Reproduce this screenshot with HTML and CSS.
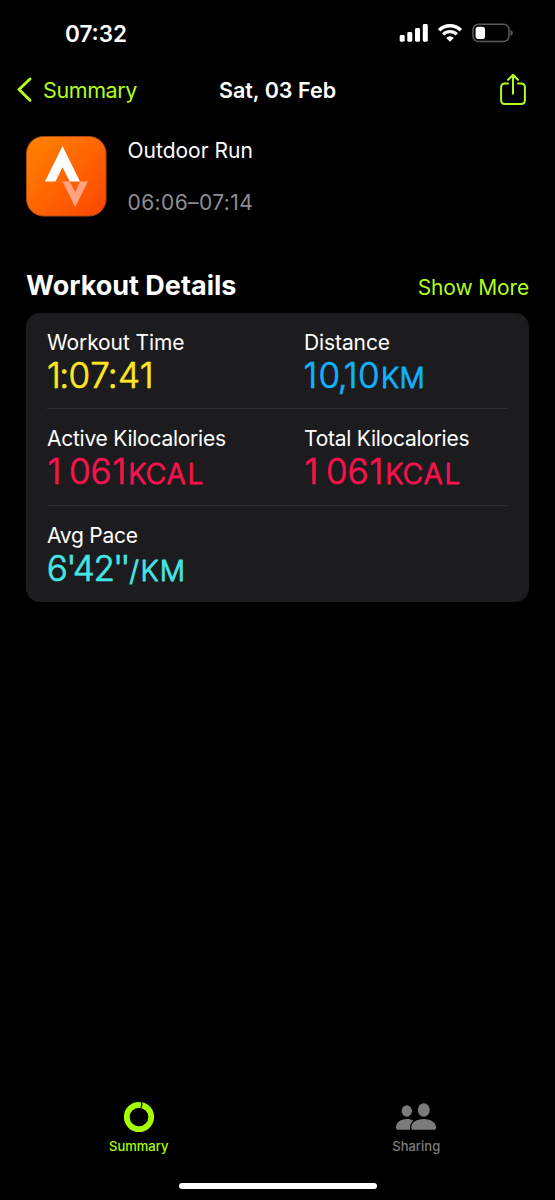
FILE: index.html
```html
<!DOCTYPE html>
<html lang="en">
<head>
<meta charset="utf-8">
<title>Workout</title>
<link rel="stylesheet" href="styles.css">
</head>
<body>
<div class="screen">
  <div class="status">
    <span class="clock">07:32</span>
    <div class="indicators">
      <svg width="30" height="20" viewBox="0 0 30 20" fill="#fff"><rect x="0.7" y="12" width="5" height="6.7" rx="1.4"/><rect x="8.3" y="9" width="5" height="9.7" rx="1.4"/><rect x="16" y="5" width="5" height="13.7" rx="1.4"/><rect x="23.8" y="1" width="5" height="17.7" rx="1.4"/></svg>
      <svg class="wifi" width="26" height="20" viewBox="0 0 26 20" fill="none" stroke="#fff" stroke-width="3.4"><path d="M2.1 7.2a15.6 15.6 0 0 1 21.8 0"/><path d="M6.2 11.4a9.7 9.7 0 0 1 13.6 0"/><path d="M13 18.8l-3.8-3.9a5.4 5.4 0 0 1 7.6 0z" fill="#fff" stroke="none"/></svg>
      <svg class="battery" width="42" height="20" viewBox="0 0 42 20"><rect x="1" y="1.2" width="36" height="17.4" rx="5.5" fill="none" stroke="#5c5c5e" stroke-width="1.5"/><rect x="3.6" y="3.7" width="9.4" height="12.4" rx="2.8" fill="#fff"/><path d="M38.500 7v6c1.700-.8 2.400-1.800 2.400-3S40.200 7.800 38.500 7z" fill="#5c5c5e"/></svg>
    </div>
  </div>
  <header class="nav">
    <a class="back"><svg width="18" height="28" viewBox="0 0 18 28" fill="none" stroke="#b1fc1d" stroke-width="3" stroke-linecap="round" stroke-linejoin="round"><path d="M15 3L4 13.500l11 10.800"/></svg><span>Summary</span></a>
    <h1 class="title">Sat, 03 Feb</h1>
    <svg class="share" width="28" height="34" viewBox="0 0 28 34" fill="none" stroke="#b1fc1d" stroke-width="2" stroke-linecap="round" stroke-linejoin="round"><path d="M9 10.500H5.500a3.400 3.400 0 0 0-3.400 3.400v13.700a3.400 3.400 0 0 0 3.400 3.400h17a3.400 3.400 0 0 0 3.400-3.400V13.900a3.400 3.400 0 0 0-3.400-3.400H19M14 20.700V2M9 6.800l5-5 5 5"/></svg>
  </header>
  <section class="workout">
    <svg class="app" width="82" height="82" viewBox="0 0 82 82"><defs><linearGradient id="orange" x1="0" y1="0" x2="1" y2="1"><stop offset="0" stop-color="#ff8500"/><stop offset="1" stop-color="#ff4500"/></linearGradient></defs><rect x="1.500" y="1.500" width="79.500" height="79.500" rx="17" fill="url(#orange)" stroke="#a94a18" stroke-width="1"/><path d="M37.500 11L55 46.500H44.700L37.500 32.300 30.500 46.500H20z" fill="#fff"/><path d="M37.500 46.500H44.700l5.500 10.500L55 46.500H63L50.200 72z" fill="#ffa381"/></svg>
    <div class="about"><span class="kind">Outdoor Run</span><span class="period">06:06–07:14</span></div>
  </section>
  <div class="heading"><h2>Workout Details</h2><a class="more">Show More</a></div>
  <main class="card">
    <div class="row">
      <div class="metric"><span class="label tight">Workout Time</span><svg class="value time" width="204" height="54" viewBox="-4 -6 204 54"><text y="32" x="6.8 17.3 32.3 53 65.7 82 99.7">1:07:41</text></svg></div>
      <div class="metric"><span class="label tight">Distance</span><svg class="value distance" width="204" height="54" viewBox="-4 -6 204 54"><text y="32" x="6.3 25.3 38.7 46.7 64.7">10,10</text><text class="unit" y="32" x="86 108">KM</text></svg></div>
    </div>
    <div class="row">
      <div class="metric"><span class="label tighter">Active Kilocalories</span><svg class="value energy" width="204" height="54" viewBox="-4 -6 204 54"><text y="32" x="7.3 20 32.7 54 72.3">1 061</text><text class="unit" y="32" x="90.300 109 129.300 148.300">KCAL</text></svg></div>
      <div class="metric"><span class="label tighter">Total Kilocalories</span><svg class="value energy" width="204" height="54" viewBox="-4 -6 204 54"><text y="32" x="7.3 20 32.7 54 72.3">1 061</text><text class="unit" y="32" x="90.300 109 129.300 148.300">KCAL</text></svg></div>
    </div>
    <div class="row">
      <div class="metric"><span class="label tighter">Avg Pace</span><svg class="value pace" width="204" height="54" viewBox="-4 -6 204 54"><text y="32" x="10.300 24.300 36.700 57.300 71 78.300">6'42''</text><text class="unit" y="32" x="87 102.500 125.300">/KM</text></svg></div>
    </div>
  </main>
  <nav class="tabs">
    <a class="tab active"><svg width="32" height="32" viewBox="0 0 32 32" fill="none"><circle cx="16" cy="16" r="12.200" stroke="#a6ff00" stroke-width="5.700"/><path d="M17.800 0.500q2.200 2.800 0 6.300" stroke="#000" stroke-width="1.200"/></svg><span>Summary</span></a>
    <a class="tab"><svg width="42" height="32" viewBox="0 0 42 32" fill="#7b7b7b"><ellipse cx="11.800" cy="10" rx="5.200" ry="5.800"/><path d="M1 26.500C1 21.500 5.500 18 11.800 18c2.500 0 4.800.600 6.500 1.600-2.300 2-3.700 4.800-3.300 9.200H3.200C1.500 28.800 1 28 1 26.500z"/><ellipse cx="28.800" cy="9" rx="6" ry="6.700"/><path d="M16.300 26.500C16.300 21.500 21.500 18 28.700 18s12.400 3.500 12.400 8.500c0 1.500-.6 2.300-2.300 2.300H18.600c-1.700 0-2.300-.8-2.300-2.300z"/></svg><span>Sharing</span></a>
  </nav>
  <div class="home"></div>
</div>
</body>
</html>
```
FILE: styles.css
```css
* { box-sizing: border-box; }
body { margin: 0; background: #000; color: #fff; font-family: Inter, "Liberation Sans", sans-serif; }
.screen { width: 555px; height: 1200px; display: flex; flex-direction: column; background: #000; }
h1, h2 { margin: 0; }
svg { display: block; flex: none; }
span, a, h1, h2 { white-space: nowrap; }
.status { height: 64px; padding: 20px 41px 0 65px; display: flex; justify-content: space-between; align-items: flex-start; }
.clock { font-size: 22.500px; line-height: 28px; font-weight: 600; }
.indicators { display: flex; padding-top: 3px; }
.wifi { margin-left: 8px; }
.battery { margin-left: 9px; }
.nav { height: 51px; padding: 0 15px; display: grid; grid-template-columns: 1fr auto 1fr; align-items: center; }
.back { display: flex; align-items: center; gap: 10px; color: #b1fc1d; font-size: 21.500px; letter-spacing: -0.4px; }
.title { font-size: 21.500px; font-weight: 600; }
.share { justify-self: end; margin-right: 13px; }
.workout { height: 152px; padding: 20px 25px 0; display: flex; gap: 20.500px; }
.about { display: flex; flex-direction: column; font-size: 21px; line-height: 28px; padding-top: 2px; }
.period { margin-top: 24px; color: #8d8d93; letter-spacing: 0.4px; }
.heading { height: 46px; padding: 0 26px; display: flex; justify-content: space-between; align-items: flex-start; }
.heading h2 { font-size: 27px; line-height: 37px; font-weight: 700; }
.more { font-size: 21px; line-height: 41px; color: #b1fc1d; letter-spacing: -0.15px; }
.card { margin: 0 26px; height: 289px; padding: 0 21px; border-radius: 14px; background: #1c1c1e; }
.row { display: grid; grid-template-columns: 257px 1fr; height: 96.300px; padding-top: 15px; border-bottom: 1px solid #2e2e30; }
.row:last-child { border-bottom: 0; }
.metric { display: flex; flex-direction: column; }
.label { font-size: 21px; line-height: 28px; padding-top: 1px; margin-bottom: -1px; }
.tight { letter-spacing: -0.1px; }
.tighter { letter-spacing: -0.25px; }
.value { margin: -6px 0 0 -4px; font-size: 35px; font-weight: 300; fill: currentColor; stroke: currentColor; stroke-width: 0.7px; stroke-linejoin: round; text-anchor: middle; }
.unit { font-size: 28px; font-weight: 300; stroke-width: 0.9px; }
.time { color: #ffe620; }
.distance { color: #10b2ff; }
.energy { color: #fa114f; }
.pace { color: #45e5e5; }
.tabs { margin-top: auto; height: 82px; display: grid; grid-template-columns: 1fr 1fr; }
.tab { display: flex; flex-direction: column; align-items: center; font-size: 13px; font-weight: 500; line-height: 20px; gap: 3px; color: #7b7b7b; }
.active { color: #a6ff00; }
.home { width: 198px; height: 6px; margin: 0 auto 11px; flex: none; border-radius: 3px; background: #fff; }
```
